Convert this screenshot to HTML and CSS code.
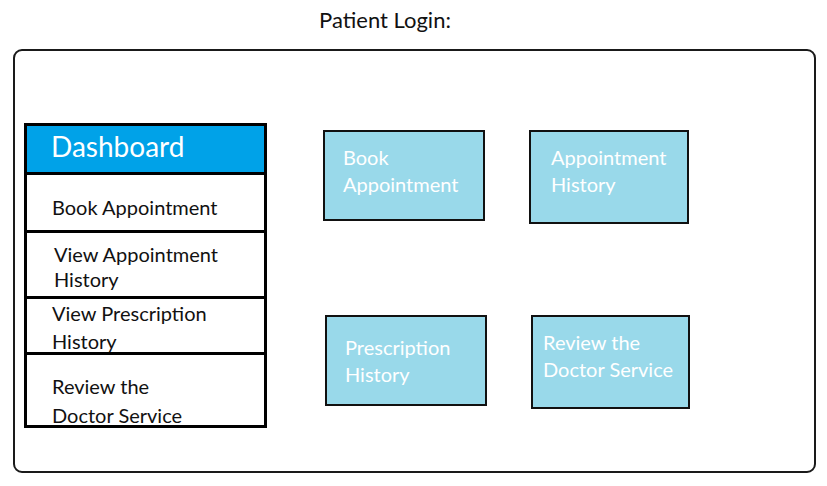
FILE: index.html
```html
<!DOCTYPE html>
<html lang="en">
<head>
    <meta charset="UTF-8">
    <meta name="viewport" content="width=device-width, initial-scale=1.0">
    <title>Patient Login</title>
    <link rel="stylesheet" href="styles.css">
</head>
<body>
    <h1 class="page-title">Patient Login:</h1>
    <div class="frame">
        <div class="sidebar">
            <div class="sidebar-head">Dashboard</div>
            <div class="side-item item-book">Book Appointment</div>
            <div class="side-item item-history">View Appointment<br>History</div>
            <div class="side-item item-rx">View Prescription<br>History</div>
            <div class="side-item item-review">Review the<br>Doctor Service</div>
        </div>
        <div class="cards">
            <div class="card card-1">Book<br>Appointment</div>
            <div class="card card-2">Appointment<br>History</div>
            <div class="card card-3">Prescription<br>History</div>
            <div class="card card-4">Review the<br>Doctor Service</div>
        </div>
    </div>
</body>
</html>
```

FILE: styles.css
```css
* {
    margin: 0;
    padding: 0;
    box-sizing: border-box;
    font-family: 'Lato', 'Open Sans', Arial, sans-serif;
}

body {
    background: #fff;
    color: #111;
    width: 827px;
    height: 486px;
    overflow: hidden;
}

.page-title {
    font-weight: normal;
    font-size: 22px;
    text-align: center;
    width: 770px;
    padding-top: 6px;
    height: 49px;
}

.frame {
    margin-left: 13px;
    width: 803px;
    height: 424px;
    border: 2px solid #1a1a1a;
    border-radius: 9px;
    padding: 72px 0 0 9px;
    display: flex;
    align-items: flex-start;
}

.sidebar {
    width: 243px;
    border: 3px solid #000;
}

.sidebar-head {
    background: #00a2e8;
    color: #fff;
    font-size: 28px;
    height: 49px;
    padding: 3px 0 0 24px;
    border-bottom: 3px solid #000;
}

.side-item {
    font-size: 20px;
    line-height: 25px;
    padding-left: 25px;
    border-bottom: 3px solid #000;
}

.item-book {
    height: 58px;
    padding-top: 20px;
}

.item-history {
    height: 66px;
    padding-top: 9px;
    padding-left: 27px;
}

.item-rx {
    height: 56px;
    padding-top: 0;
    line-height: 28px;
}

.item-review {
    height: 70px;
    padding-top: 17px;
    line-height: 29px;
    border-bottom: none;
}

.cards {
    display: grid;
    grid-template-columns: 162px 160px;
    grid-template-rows: 93px 95px;
    column-gap: 44px;
    row-gap: 92px;
    margin-left: 56px;
    margin-top: 7px;
}

.card {
    background: #99d9ea;
    border: 2px solid #111;
    color: #fff;
    font-size: 20px;
    line-height: 27px;
    padding: 12px 0 0 18px;
    height: 91px;
}

.card-2 {
    padding-left: 20px;
    height: 94px;
}

.card-3 {
    width: 162px;
    margin-left: 2px;
    padding-top: 17px;
}

.card-4 {
    width: 159px;
    margin-left: 2px;
    padding: 12px 0 0 10px;
    height: 94px;
}
```
